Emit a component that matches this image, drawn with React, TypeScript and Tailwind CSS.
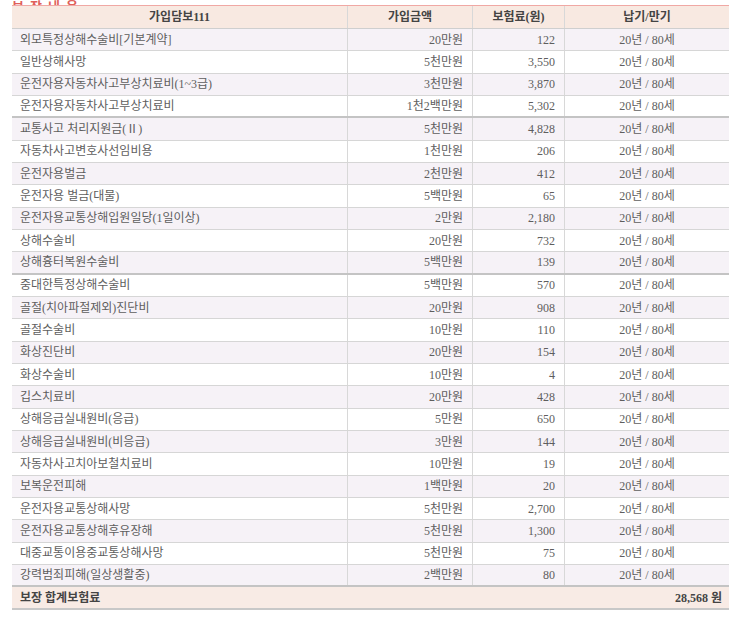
import React from 'react';

interface Coverage {
  name: string;
  amount: string;
  premium: string;
  thick?: boolean;
}

const rows: Coverage[] = [
  { name: '외모특정상해수술비[기본계약]', amount: '20만원', premium: '122' },
  { name: '일반상해사망', amount: '5천만원', premium: '3,550' },
  { name: '운전자용자동차사고부상치료비(1~3급)', amount: '3천만원', premium: '3,870' },
  { name: '운전자용자동차사고부상치료비', amount: '1천2백만원', premium: '5,302', thick: true },
  { name: '교통사고 처리지원금(Ⅱ)', amount: '5천만원', premium: '4,828' },
  { name: '자동차사고변호사선임비용', amount: '1천만원', premium: '206' },
  { name: '운전자용벌금', amount: '2천만원', premium: '412' },
  { name: '운전자용 벌금(대물)', amount: '5백만원', premium: '65' },
  { name: '운전자용교통상해입원일당(1일이상)', amount: '2만원', premium: '2,180' },
  { name: '상해수술비', amount: '20만원', premium: '732' },
  { name: '상해흉터복원수술비', amount: '5백만원', premium: '139', thick: true },
  { name: '중대한특정상해수술비', amount: '5백만원', premium: '570' },
  { name: '골절(치아파절제외)진단비', amount: '20만원', premium: '908' },
  { name: '골절수술비', amount: '10만원', premium: '110' },
  { name: '화상진단비', amount: '20만원', premium: '154' },
  { name: '화상수술비', amount: '10만원', premium: '4' },
  { name: '깁스치료비', amount: '20만원', premium: '428' },
  { name: '상해응급실내원비(응급)', amount: '5만원', premium: '650' },
  { name: '상해응급실내원비(비응급)', amount: '3만원', premium: '144' },
  { name: '자동차사고치아보철치료비', amount: '10만원', premium: '19' },
  { name: '보복운전피해', amount: '1백만원', premium: '20' },
  { name: '운전자용교통상해사망', amount: '5천만원', premium: '2,700' },
  { name: '운전자용교통상해후유장해', amount: '5천만원', premium: '1,300' },
  { name: '대중교통이용중교통상해사망', amount: '5천만원', premium: '75' },
  { name: '강력범죄피해(일상생활중)', amount: '2백만원', premium: '80', thick: true },
];

const grid = 'grid grid-cols-[336px_125px_92px_164px]';

export default function App() {
  return (
    <div
      className="w-[743px] h-[622px] bg-white overflow-hidden px-[12px] text-[12px] text-[#5e5e5e]"
      style={{ fontFamily: '"Liberation Serif", "Noto Sans CJK KR", serif' }}
    >
      {/* Title, scrolled mostly out of view */}
      <div className="h-[5px] overflow-hidden flex items-end">
        <span className="text-[13px] leading-[13px] font-bold text-[#e0605a] translate-y-[8px] tracking-[6px]">보장내용</span>
      </div>

      <div className="w-[717px] border-t border-[#f0a8a4]">
        {/* Header */}
        <div className={`${grid} h-[23px] bg-[#f8e9e1] border-b border-[#cfcfcf] font-bold text-[#444]`}>
          <div className="flex items-center justify-center border-r border-[#d8d8d8]">가입담보111</div>
          <div className="flex items-center justify-center border-r border-[#d8d8d8]">가입금액</div>
          <div className="flex items-center justify-center border-r border-[#d8d8d8]">보험료(원)</div>
          <div className="flex items-center justify-center">납기/만기</div>
        </div>

        {rows.map((row, i) => (
          <div
            key={row.name}
            className={`${grid} h-[22.33px] ${i % 2 === 0 ? 'bg-[#f6f2f7]' : 'bg-white'} ${
              row.thick ? 'border-b-2 border-[#c4c4c4]' : 'border-b border-[#d6d6d6]'
            }`}
          >
            <div className="flex items-center pl-[8px] border-r border-[#d8d8d8] whitespace-nowrap">{row.name}</div>
            <div className="flex items-center justify-end pr-[9px] border-r border-[#d8d8d8]">{row.amount}</div>
            <div className="flex items-center justify-end pr-[9px] border-r border-[#d8d8d8]">{row.premium}</div>
            <div className="flex items-center justify-center">20년 / 80세</div>
          </div>
        ))}

        {/* Footer */}
        <div className="h-[23px] bg-[#f8ebe5] border-b-2 border-[#c8c8c8] flex items-center justify-between pl-[8px] pr-[7px] font-bold text-[#444]">
          <span>보장 합계보험료</span>
          <span>28,568 원</span>
        </div>
      </div>
    </div>
  );
}
